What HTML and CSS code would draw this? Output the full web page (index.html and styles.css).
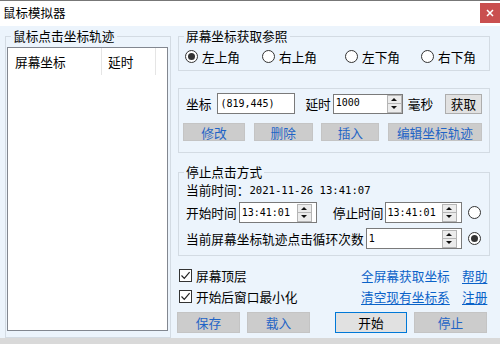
FILE: index.html
```html
<!DOCTYPE html>
<html>
<head>
<meta charset="utf-8">
<link rel="stylesheet" href="styles.css">
</head>
<body>
<div class="window">
  <div class="titlebar">
    <span class="title">鼠标模拟器</span>
    <span class="close"><svg width="8" height="8" viewBox="0 0 8 8"><path d="M1 1L7 7M7 1L1 7" stroke="#fff" stroke-width="1.5"/></svg></span>
  </div>
  <div class="body">
    <fieldset class="group track">
      <legend>鼠标点击坐标轨迹</legend>
      <div class="list">
        <div class="list-head">
          <div class="col c1">屏幕坐标</div>
          <div class="col c2">延时</div>
        </div>
      </div>
    </fieldset>
    <div class="right">
      <fieldset class="group ref">
        <legend>屏幕坐标获取参照</legend>
        <div class="radios">
          <label class="opt"><span class="radio on"></span>左上角</label>
          <label class="opt"><span class="radio"></span>右上角</label>
          <label class="opt"><span class="radio"></span>左下角</label>
          <label class="opt"><span class="radio"></span>右下角</label>
        </div>
      </fieldset>
      <div class="edit">
        <div class="r1">
          <span>坐标</span>
          <span class="input coord">(819,445)</span>
          <span class="lbl-delay">延时</span>
          <span class="input delay"><span>1000</span><span class="spinner"><span class="up"></span><span class="dn"></span></span></span>
          <span class="unit">毫秒</span>
          <span class="get">获取</span>
        </div>
        <div class="r2">
          <span class="btn gray w62">修改</span>
          <span class="btn gray w59">删除</span>
          <span class="btn gray w58">插入</span>
          <span class="btn gray w94">编辑坐标轨迹</span>
        </div>
      </div>
      <fieldset class="group stop">
        <legend>停止点击方式</legend>
        <div class="now">当前时间：<span class="mono">2021-11-26 13:41:07</span></div>
        <div class="trow">
          <span>开始时间</span>
          <span class="input time t1"><span>13:41:01</span><span class="spinner"><span class="up"></span><span class="dn"></span></span></span>
          <span class="lbl-stop">停止时间</span>
          <span class="input time t2"><span>13:41:01</span><span class="spinner"><span class="up"></span><span class="dn"></span></span></span>
          <span class="radio rr"></span>
        </div>
        <div class="trow second">
          <span>当前屏幕坐标轨迹点击循环次数</span>
          <span class="input time t3"><span>1</span><span class="spinner"><span class="up"></span><span class="dn"></span></span></span>
          <span class="radio rr on"></span>
        </div>
      </fieldset>
      <div class="options">
        <div class="checks">
          <label class="chk"><span class="cbox"><svg width="11" height="11" viewBox="0 0 11 11"><path d="M1.5 5.5L4.3 8.4L9.6 2.2" fill="none" stroke="#222" stroke-width="1.2"/></svg></span>屏幕顶层</label>
          <label class="chk"><span class="cbox"><svg width="11" height="11" viewBox="0 0 11 11"><path d="M1.5 5.5L4.3 8.4L9.6 2.2" fill="none" stroke="#222" stroke-width="1.2"/></svg></span>开始后窗口最小化</label>
        </div>
        <div class="links">
          <a class="link">全屏幕获取坐标</a>
          <a class="link u">帮助</a>
          <a class="link u">清空现有坐标系</a>
          <a class="link u">注册</a>
        </div>
      </div>
      <div class="actions">
        <span class="btn gray save">保存</span>
        <span class="btn gray load">载入</span>
        <span class="btn start">开始</span>
        <span class="btn gray halt">停止</span>
      </div>
    </div>
  </div>
  <div class="bottom"></div>
</div>
</body>
</html>
```
FILE: styles.css
```css
* { box-sizing: border-box; }
html, body { margin: 0; padding: 0; }
body {
  width: 500px;
  height: 344px;
  overflow: hidden;
  font-family: "Noto Sans CJK SC", "Noto Sans", sans-serif;
  font-size: 12.7px;
  color: #000;
  background: #ecf4fc;
}
.window { width: 500px; height: 344px; display: flex; flex-direction: column; }
.titlebar {
  height: 26px;
  background: #fff;
  border-top: 1px solid #777;
  display: flex;
  align-items: flex-start;
}
.title { margin-left: 3px; line-height: 24px; font-size: 12.5px; }
.close {
  margin-left: auto;
  margin-top: 2px;
  width: 20px;
  height: 20px;
  background: #c94f4f;
  display: flex;
  align-items: center;
  justify-content: center;
}
.body { height: 312px; display: flex; padding-left: 5px; background: #ecf4fc; }
.bottom { height: 6px; background: #d9d9d9; }

.group { margin: 0; border: 1px solid #d3dbe3; min-width: 0; }
.group legend { padding: 0 2px; line-height: 16px; height: 16px; }

.track { margin-top: 2px; width: 166px; padding: 3px 2px 1px 1px; }
.track legend { margin-left: 4px; }
.list { height: 284px; background: #fff; border: 1px solid #828790; }
.list-head { display: flex; height: 27px; }
.col { border-right: 1px solid #e5e5e5; line-height: 27px; }
.c1 { width: 94px; padding-left: 7px; }
.c2 { width: 54px; padding-left: 6px; }

.right { margin-left: 6px; width: 313px; display: flex; flex-direction: column; }

.ref { margin: 2px 0 0 1px; padding: 3px 7px 6px 7px; }
.ref legend, .stop legend { margin-left: -2px; }
.radios { display: grid; grid-template-columns: 77px 83px 76px auto; height: 17px; align-items: center; }
.opt { display: flex; align-items: center; gap: 4px; white-space: nowrap; margin-left: -1px; }
.radio {
  width: 13px;
  height: 13px;
  border: 1px solid #333;
  border-radius: 50%;
  background: #fff;
  flex: none;
  display: flex;
  align-items: center;
  justify-content: center;
}
.radio.on::after { content: ""; width: 7px; height: 7px; border-radius: 50%; background: #333; }

.edit { margin: 17px 0 0 1px; border: 1px solid #d3dbe3; padding: 4px 7px 11px 7px; }
.r1 { display: flex; align-items: center; height: 21px; }
.r2 { display: flex; justify-content: space-between; margin: 9px 0 0 -3px; height: 18px; }

.input {
  background: #fff;
  border: 1px solid #7a7a7a;
  height: 21px;
  display: flex;
  align-items: center;
  justify-content: space-between;
  font-family: "DejaVu Sans Mono", monospace;
  font-size: 10px;
  padding-left: 2px;
  flex: none;
}
.coord { margin-left: 6px; width: 78px; }
.lbl-delay { margin-left: 10px; }
.delay { margin-left: 2px; width: 70px; height: 20px; padding-bottom: 2px; }
.unit { margin-left: 5px; }
.get {
  margin-left: auto;
  width: 37px;
  height: 20px;
  background: #e1e1e1;
  border: 1px solid #adadad;
  display: flex;
  align-items: center;
  justify-content: center;
}

.spinner {
  width: 15px;
  height: 18px;
  display: flex;
  flex-direction: column;
  border: 1px solid #b5b5b5;
  background: #ececec;
  align-self: center;
}
.delay .spinner { margin-top: 2px; }
.up, .dn { flex: 1; display: flex; align-items: center; justify-content: center; }
.up { border-bottom: 1px solid #b5b5b5; }
.up::after { content: ""; border-left: 3px solid transparent; border-right: 3px solid transparent; border-bottom: 3px solid #111; }
.dn::after { content: ""; border-left: 3px solid transparent; border-right: 3px solid transparent; border-top: 3px solid #111; }

.btn { display: flex; align-items: center; justify-content: center; flex: none; }
.btn.gray { background: #cccccc; color: #1f64c6; border: 1px solid #c4c4c4; }
.w62 { width: 62px; }
.w59 { width: 59px; }
.w58 { width: 58px; }
.w94 { width: 94px; }

.stop { margin: 11px 0 0 1px; padding: 2px 7px 6px 7px; }
.now { height: 16px; line-height: 16px; display: flex; align-items: center; }
.mono { font-family: "DejaVu Sans Mono", monospace; font-size: 10.6px; }
.trow { display: flex; align-items: center; height: 21px; margin-top: 4px; }
.trow.second { margin-top: 5px; }
.time .spinner { margin-right: 4px; }
.t1 { margin-left: 2px; width: 78px; }
.lbl-stop { margin-left: 16px; }
.t2 { margin-left: 1px; width: 77px; }
.t3 { margin-left: 2px; width: 96px; }
.rr { margin-left: 6px; }

.options { display: flex; margin-top: 9px; height: 41px; }
.checks { display: flex; flex-direction: column; gap: 1px; margin-left: 2px; }
.chk { display: flex; align-items: center; height: 20px; gap: 4px; }
.cbox {
  width: 13px;
  height: 13px;
  border: 1px solid #333;
  background: #fff;
  display: flex;
  align-items: center;
  justify-content: center;
}
.links {
  margin-left: auto;
  display: grid;
  grid-template-columns: 101px 28px;
  grid-auto-rows: 20px;
  row-gap: 1px;
  align-items: center;
}
.link { color: #0a62c8; text-decoration: none; }
.link.u { text-decoration: underline; text-underline-offset: 2px; }

.actions { display: flex; margin-top: 6px; height: 21px; }
.save { width: 63px; }
.load { width: 63px; margin-left: 7px; }
.start { width: 72px; margin-left: 25px; background: #e1e1e1; border: 1px solid #0078d7; }
.halt { width: 73px; margin-left: 7px; }
```
